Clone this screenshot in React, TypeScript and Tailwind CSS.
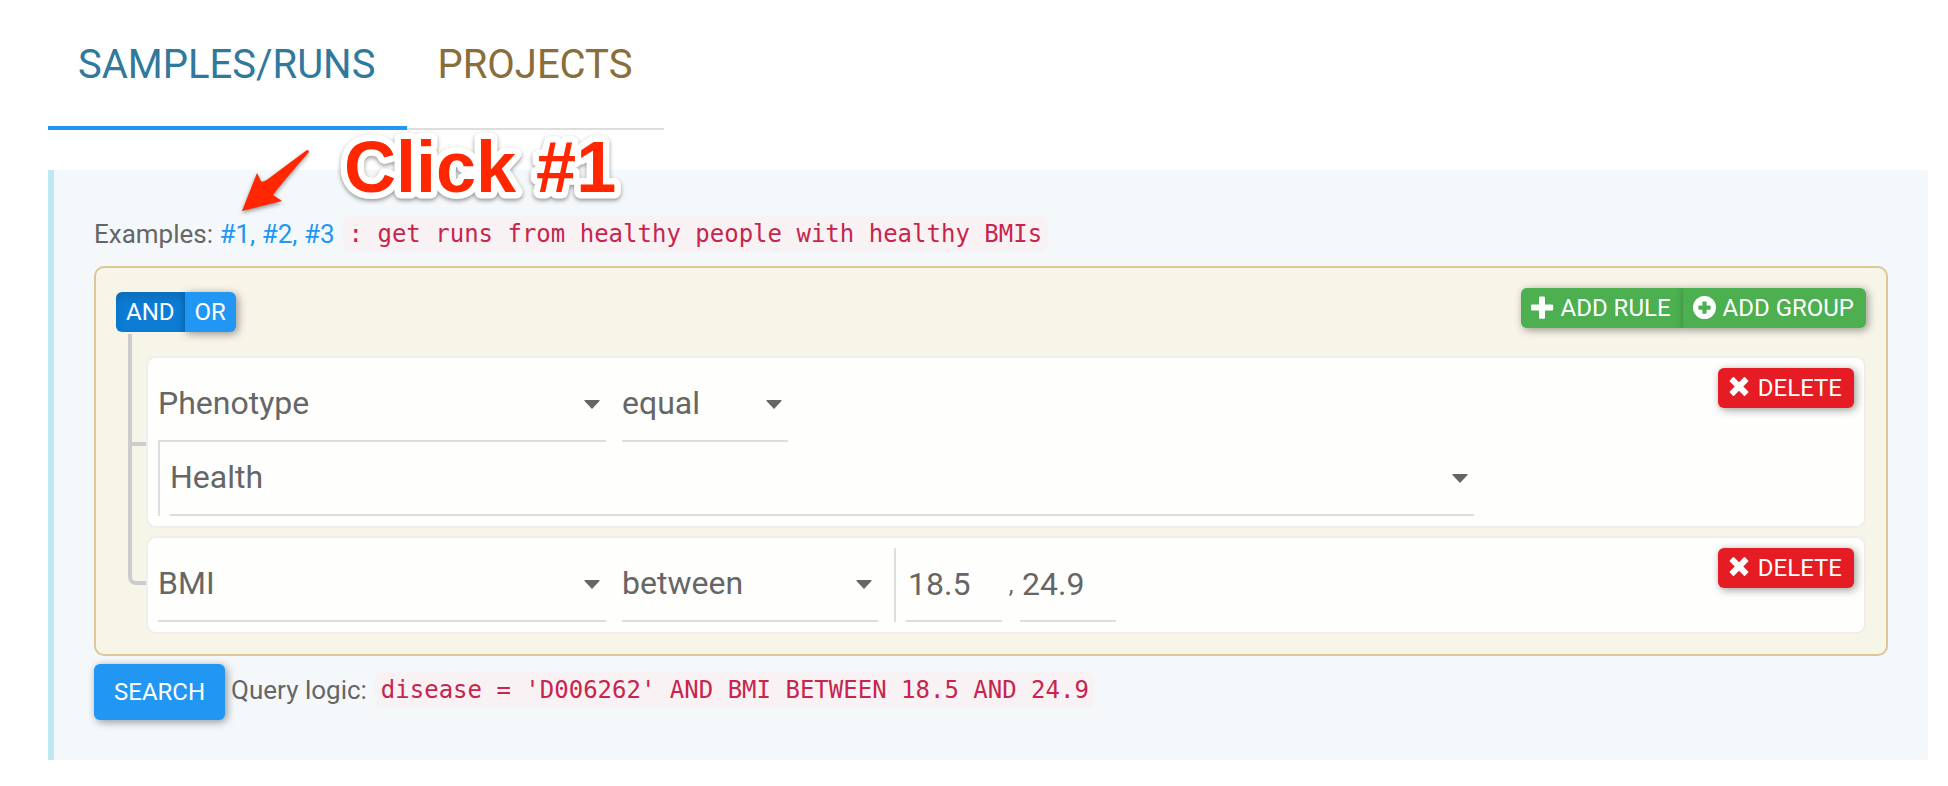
import React, { useState } from "react";

type IconProps = { children: React.ReactNode };

function Icon({ children }: IconProps) {
  return (
    <svg viewBox="0 0 24 24" className="size-6 shrink-0 fill-current" aria-hidden="true">
      {children}
    </svg>
  );
}

const PlusIcon = () => (
  <Icon>
    <path d="M9.2 0.5h3.600a1.200 1.200 0 0 1 1.200 1.200V8.500h7a1.200 1.200 0 0 1 1.200 1.200v3.600a1.200 1.200 0 0 1-1.200 1.200H14v7a1.200 1.200 0 0 1-1.200 1.200H9.200a1.200 1.200 0 0 1-1.200-1.200v-7H1.200A1.200 1.200 0 0 1 0 13.300V9.700a1.200 1.200 0 0 1 1.200-1.200H8V1.700A1.200 1.200 0 0 1 9.200 0.500z" />
  </Icon>
);

const PlusSignIcon = () => (
  <Icon>
    <path
      fillRule="evenodd"
      d="M11.500 0a11.500 11.500 0 1 1 0 23a11.500 11.500 0 0 1 0-23zM10 5.500a.6.6 0 0 0-.6.6V9.500H6a.6.6 0 0 0-.6.6v3a.6.6 0 0 0 .6.6h3.400v3.400a.6.6 0 0 0 .6.6h3a.6.6 0 0 0 .6-.6v-3.400H17a.6.6 0 0 0 .6-.6v-3a.6.6 0 0 0-.6-.6h-3.400V6.100a.6.6 0 0 0-.6-.6z"
    />
  </Icon>
);

const RemoveIcon = () => (
  <Icon>
    <path d="M1.800 4.400L4.900 1.300a.9.9 0 0 1 1.200 0L11 6.200l4.900-4.900a.9.9 0 0 1 1.200 0l3.100 3.100a.9.9 0 0 1 0 1.200L15.300 10.500l4.900 4.900a.9.9 0 0 1 0 1.200l-3.100 3.100a.9.9 0 0 1-1.200 0L11 14.800l-4.900 4.900a.9.9 0 0 1-1.200 0l-3.100-3.100a.9.9 0 0 1 0-1.200L6.700 10.500L1.800 5.600a.9.9 0 0 1 0-1.200z" />
  </Icon>
);

type SelectProps = { label: string; options: string[]; width: string };

function Select({ label, options, width }: SelectProps) {
  return (
    <span className={`grid h-[74px] items-center border-b-2 border-[#dddddd] ${width}`}>
      <select
        aria-label={label}
        className="col-start-1 row-start-1 h-full w-full appearance-none bg-transparent pb-0.5 text-[32px] text-[#666666] outline-none"
      >
        {options.map((o) => (
          <option key={o}>{o}</option>
        ))}
      </select>
      <svg
        viewBox="0 0 16 9"
        className="pointer-events-none col-start-1 row-start-1 mr-1.5 h-[9px] w-4 justify-self-end fill-[#666666]"
        aria-hidden="true"
      >
        <path d="M0.500 0h15v1L8 9L0.500 1z" />
      </svg>
    </span>
  );
}

function NumberBox({ label, value }: { label: string; value: string }) {
  return (
    <input
      type="text"
      aria-label={label}
      defaultValue={value}
      className="h-[74px] w-24 border-b-2 border-[#dddddd] bg-transparent px-0.5 text-[32px] text-[#666666] outline-none"
    />
  );
}

const raised = "shadow-[2px_2px_8px_rgba(0,0,0,0.4)]";

function DeleteButton() {
  return (
    <button
      type="button"
      className={`flex h-10 shrink-0 items-center gap-1.5 rounded-md bg-[#e51c23] pr-3 pl-2.5 text-2xl text-white ${raised}`}
    >
      <RemoveIcon />
      DELETE
    </button>
  );
}

type RuleProps = { first?: boolean; last?: boolean; children: React.ReactNode };

function Rule({ first, last, children }: RuleProps) {
  return (
    <li className="flex">
      <div className="flex w-[18px] shrink-0 flex-col" aria-hidden="true">
        <div className={`border-l-4 border-[#cccccc] ${first ? "h-[22px]" : "h-2"}`} />
        <div className="grid flex-1 grid-rows-2">
          <div
            className={`border-l-4 border-[#cccccc] ${last ? "rounded-bl-lg border-b-4" : ""}`}
          />
          <div className={`border-[#cccccc] ${last ? "" : "border-t-4 border-l-4"}`} />
        </div>
      </div>
      <div
        className={`flex min-w-0 flex-1 items-start justify-between rounded-[10px] border-2 border-[#eeeeee] bg-[#fefefd] p-2.5 ${first ? "mt-[22px]" : "mt-2"}`}
      >
        {children}
        <DeleteButton />
      </div>
    </li>
  );
}

const codeStyle =
  "rounded-lg bg-[#f9f2f4] px-1.5 text-2xl leading-9 text-[#c7254e] font-['DejaVu_Sans_Mono',monospace]";

export default function App() {
  const [tab, setTab] = useState("samples");
  const tabBase = "h-[130px] pr-8 pl-[30px] text-[40px] leading-none";

  return (
    <div className="relative bg-white pr-5 pb-6 pl-12 font-[Roboto,sans-serif] text-[26px] text-[#666666]">
      <div role="tablist" className="flex">
        <button
          type="button"
          role="tab"
          aria-selected={tab === "samples"}
          onClick={() => setTab("samples")}
          className={`${tabBase} text-[#31799c] ${tab === "samples" ? "shadow-[inset_0_-4px_0_#2196f3]" : "shadow-[inset_0_-2px_0_#dddddd]"}`}
        >
          SAMPLES/RUNS
        </button>
        <button
          type="button"
          role="tab"
          aria-selected={tab === "projects"}
          onClick={() => setTab("projects")}
          className={`${tabBase} text-[#8a6d3b] ${tab === "projects" ? "shadow-[inset_0_-4px_0_#2196f3]" : "shadow-[inset_0_-2px_0_#dddddd]"}`}
        >
          PROJECTS
        </button>
      </div>

      <main className="mt-10 border-l-[6px] border-[#bce8f1] bg-[#f4f8fb] pt-[46px] pr-10 pb-10 pl-10">
        <p className="flex items-center gap-2 leading-9 whitespace-nowrap">
          <span>
            Examples:{" "}
            <span className="text-[#2196f3]">
              <a href="#1">#1,</a> <a href="#2">#2,</a> <a href="#3">#3</a>
            </span>
          </span>
          <code className={codeStyle}>: get runs from healthy people with healthy BMIs</code>
        </p>

        <section className="mt-3.5 rounded-[10px] border-2 border-[#dcc896] bg-[#f7f4e8] p-5 text-2xl">
          <div className="flex items-start justify-between">
            <div className="mt-1 flex text-white">
              <button
                type="button"
                className="h-10 rounded-l-md bg-[#0c7cd5] px-2.5 shadow-[inset_0_6px_10px_rgba(0,0,0,0.125)]"
              >
                AND
              </button>
              <button type="button" className={`h-10 rounded-r-md bg-[#2196f3] px-2.5 ${raised}`}>
                OR
              </button>
            </div>
            <div className="flex text-white">
              <button
                type="button"
                className={`flex h-10 items-center gap-1.5 rounded-l-md bg-[#4caf50] pr-3 pl-2.5 ${raised}`}
              >
                <PlusIcon />
                ADD RULE
              </button>
              <button
                type="button"
                className={`flex h-10 items-center gap-1.5 rounded-r-md bg-[#4caf50] pr-3 pl-2.5 ${raised}`}
              >
                <PlusSignIcon />
                ADD GROUP
              </button>
            </div>
          </div>

          <ul className="mt-0.5 pl-3">
            <Rule first>
              <div>
                <div className="flex gap-4">
                  <Select label="Field" options={["Phenotype", "BMI"]} width="w-[448px]" />
                  <Select label="Operator" options={["equal", "between"]} width="w-[166px]" />
                </div>
                <div className="flex border-l-2 border-[#dddddd] pl-2.5">
                  <Select label="Phenotype value" options={["Health"]} width="w-[1304px]" />
                </div>
              </div>
            </Rule>
            <Rule last>
              <div className="flex gap-4">
                <Select label="Field" options={["BMI", "Phenotype"]} width="w-[448px]" />
                <Select label="Operator" options={["between", "equal"]} width="w-[256px]" />
                <div className="flex items-center border-l-2 border-[#dddddd] pl-2.5">
                  <NumberBox label="Minimum" value="18.5" />
                  <span className="w-[18px] text-center">,</span>
                  <NumberBox label="Maximum" value="24.9" />
                </div>
              </div>
            </Rule>
          </ul>
        </section>

        <div className="mt-2 flex items-start whitespace-nowrap">
          <button
            type="button"
            className={`h-14 rounded-md bg-[#2196f3] px-5 text-2xl text-white ${raised}`}
          >
            SEARCH
          </button>
          <p className="mt-2 ml-1.5 flex items-center gap-2 leading-9">
            Query logic:
            <code className={codeStyle}>disease = 'D006262' AND BMI BETWEEN 18.5 AND 24.9</code>
          </p>
        </div>
      </main>

      <svg
        viewBox="0 0 400 120"
        className="pointer-events-none absolute top-[110px] left-[240px] h-[120px] w-[400px] drop-shadow-[0_2px_2px_rgba(0,0,0,0.4)]"
      >
        <path
          className="fill-[#ff2600]"
          d="M67 40Q69 40 69 42Q40 75 33 85L42 91L2 101L17 63L21 71Q22 73 28 69Z"
        />
        <text
          x="104"
          y="82"
          className="fill-[#ff2600] stroke-white stroke-[13px] text-[72px] font-bold font-['Liberation_Sans',Arial,sans-serif] [paint-order:stroke_fill] [stroke-linejoin:round]"
        >
          Click #1
        </text>
      </svg>
    </div>
  );
}
